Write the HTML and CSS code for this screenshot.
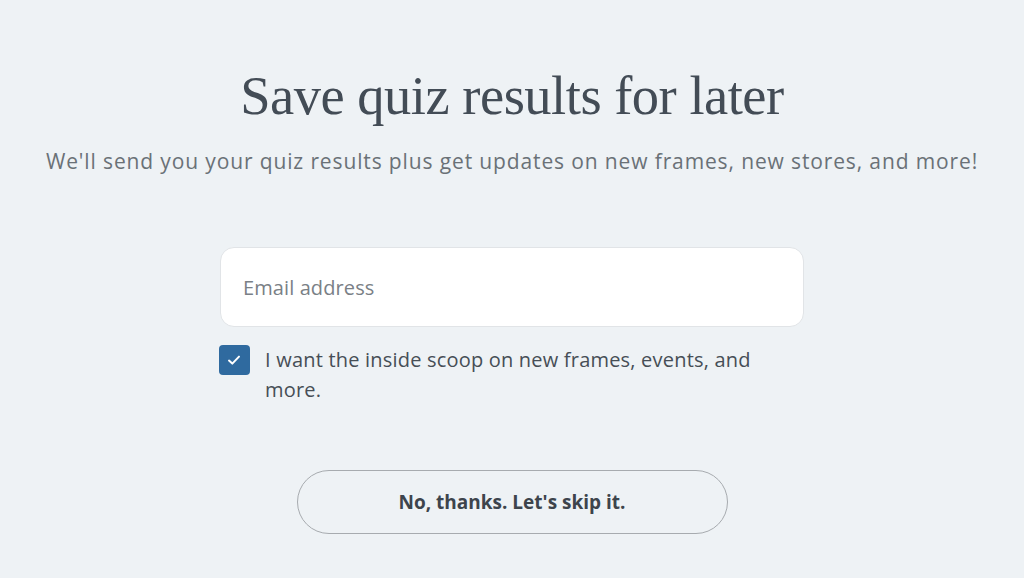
FILE: index.html
```html
<!DOCTYPE html>
<html>
<head>
<meta charset="utf-8">
<link rel="stylesheet" href="styles.css">
</head>
<body>
<main class="page">
  <h1 class="title">Save quiz results for later</h1>
  <p class="subtitle">We'll send you your quiz results plus get updates on new frames, new stores, and more!</p>
  <form class="form">
    <div class="field">
      <input class="input" type="email" placeholder="Email address">
    </div>
    <label class="check">
      <span class="box">
        <svg width="14" height="14" viewBox="0 0 14 14"><path d="M2 7.6 L5.3 10.6 L12 3.6" fill="none" stroke="#fff" stroke-width="2" stroke-linecap="round" stroke-linejoin="round"/></svg>
      </span>
      <span class="check-text">I want the inside scoop on new frames, events, and more.</span>
    </label>
    <button type="button" class="skip">No, thanks. Let's skip it.</button>
  </form>
</main>
</body>
</html>
```

FILE: styles.css
```css
html, body {
  margin: 0;
  padding: 0;
  background: #eef2f5;
}
body {
  font-family: "Open Sans", "Liberation Sans", sans-serif;
  color: #414b55;
  width: 1024px;
  height: 578px;
  overflow: hidden;
}
.page {
  display: flex;
  flex-direction: column;
  align-items: center;
  padding-top: 64px;
}
.title {
  margin: 0;
  font-family: "Liberation Serif", "DejaVu Serif", serif;
  font-weight: 400;
  font-size: 54.5px;
  line-height: 64px;
  color: #434c56;
  letter-spacing: -0.5px;
}
.subtitle {
  margin: 18px 0 0;
  font-size: 21px;
  line-height: 30px;
  letter-spacing: 0.87px;
  color: #6a7177;
  white-space: nowrap;
}
.form {
  margin-top: 71px;
  width: 584px;
  display: flex;
  flex-direction: column;
}
.field {
  display: flex;
}
.input {
  box-sizing: border-box;
  width: 584px;
  height: 80px;
  border: 1px solid #e1e4e7;
  border-radius: 14px;
  background: #fff;
  padding: 0 22px;
  font-family: inherit;
  font-size: 20px;
  letter-spacing: 0.1px;
  color: #414b55;
  outline: none;
}
.input::placeholder {
  color: #7a8086;
}
.check {
  display: flex;
  align-items: flex-start;
  margin-top: 18px;
}
.box {
  flex: none;
  width: 31px;
  height: 30px;
  border-radius: 4px;
  background: #2f6a9f;
  display: flex;
  align-items: center;
  justify-content: center;
  margin-left: -1px;
}
.box svg {
  margin-left: -2px;
}
.check-text {
  margin-left: 15px;
  width: 510px;
  font-size: 20px;
  letter-spacing: 0.2px;
  line-height: 30px;
  color: #464e56;
}
.skip {
  align-self: center;
  margin-top: 65px;
  width: 431px;
  height: 64px;
  border: 1px solid #a7abaf;
  border-radius: 32px;
  background: transparent;
  font-family: inherit;
  font-weight: 700;
  font-size: 19px;
  color: #3d444c;
  cursor: pointer;
}
```
